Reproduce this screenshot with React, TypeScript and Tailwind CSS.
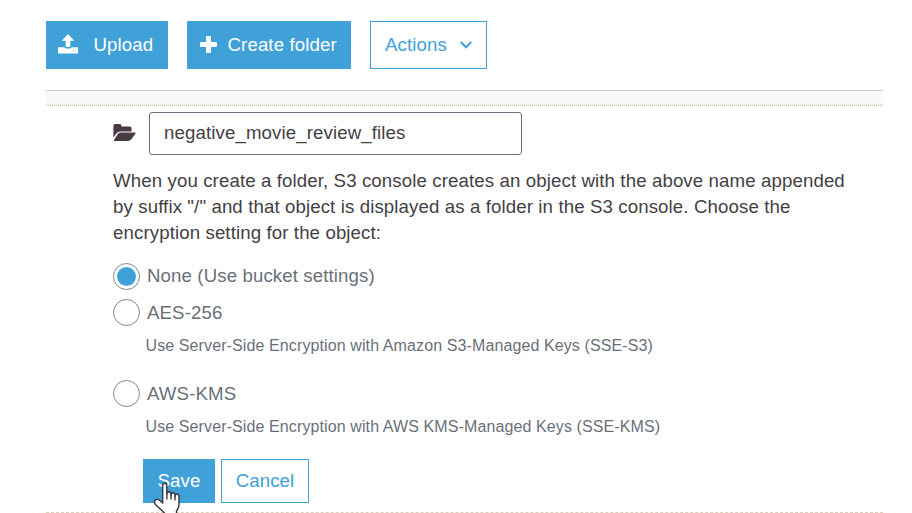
import React from "react";

function UploadIcon() {
  return (
    <svg className="mb-[3px] h-5 w-5 shrink-0" viewBox="0 0 20 20" fill="currentColor">
      <path d="M10 0 16.2 6.8H12.3V12Q12.3 13 11.3 13H8.7Q7.7 13 7.7 12V6.8H3.8Z" />
      <path d="M.5 13.3H6.3L7.6 14.4H12.4L13.7 13.3H19.5Q20 13.3 20 13.8V18.9Q20 19.4 19.5 19.4H.5Q0 19.4 0 18.9V13.8Q0 13.3 .5 13.3Z" />
      <path d="M13.5 16.4h1.4v1.2h-1.4zM16.5 16.4h1.4v1.2h-1.4z" fill="#7fc0e6" />
    </svg>
  );
}

function PlusIcon() {
  return (
    <svg className="mb-[2px] h-[17px] w-[17px] shrink-0" viewBox="0 0 17 17" fill="currentColor">
      <path d="M6 1Q6 0 7 0H10Q11 0 11 1V6H16Q17 6 17 7V10Q17 11 16 11H11V16Q11 17 10 17H7Q6 17 6 16V11H1Q0 11 0 10V7Q0 6 1 6H6Z" />
    </svg>
  );
}

function FolderIcon() {
  return (
    <svg className="mb-[2px] h-[17px] w-[23px] shrink-0" viewBox="0 0 23 17" fill="#463b42">
      <path d="M.4 2Q.4 0 2.2 0H6.6Q8.5 0 8.5 2V2.6H16.7Q18.6 2.6 18.6 4.6V7.4H7.4Q5.2 7.4 3.8 9L.4 13.4Z" />
      <path d="M7.3 8.5H22Q23.2 8.5 22.4 9.7L18.4 15.2Q17 17 15 17H1.6Q.4 17 1.2 15.8L4.8 10.1Q5.8 8.5 7.3 8.5Z" />
    </svg>
  );
}

function HandCursor() {
  return (
    <svg className="absolute top-[23px] left-[10px] h-[34px] w-[27px]" viewBox="0 0 27 34" fill="#fff" stroke="#3c3540" strokeWidth="1.4" strokeLinejoin="round" strokeLinecap="round">
      <path d="M9.7 19V3.7Q9.7 1.2 11.7 1.2T13.8 3.7V12Q14 9.7 16 9.7T18 12V13Q18.2 10.7 20 10.7T22 13V14.3Q22.3 12 24 12T26 14.3V22Q26 26 23.5 29V34H11.5V31L2.4 22.5Q.8 20 2 18.4T6 17.8L9.7 21Z" />
      <path d="M13.9 12V17M18 13V17M22 14.3V18" />
    </svg>
  );
}

type OptionProps = { label: string; labelClass?: string; checked?: boolean; hint?: string };

function EncryptionOption({ label, labelClass = "", checked, hint }: OptionProps) {
  return (
    <div>
      <div className="flex h-[27px] items-center gap-[7px]">
        <span className="flex h-[27px] w-[27px] shrink-0 items-center justify-center rounded-full border border-[#7d8794]">
          {checked && <span className="h-[19px] w-[19px] rounded-full bg-[#40a1d9]" />}
        </span>
        <span className={`text-[18.67px] leading-[26px] whitespace-nowrap ${labelClass}`}>{label}</span>
      </div>
      {hint && <p className="mt-[9px] ml-[32.5px] h-[21px] text-[16px] leading-[22px] whitespace-nowrap">{hint}</p>}
    </div>
  );
}

export default function App() {
  return (
    <main className="h-[513px] w-[912px] overflow-hidden bg-white pt-[21px] pl-[46px] font-['Liberation_Sans',Arial,sans-serif] text-[18.67px] leading-[26px] tracking-[0.108px] text-[#434145]">
      <div className="flex h-12 gap-[19px]">
        <button className="flex w-[122px] items-center gap-[15.5px] bg-[#40a1d9] pl-3 text-white">
          <UploadIcon />
          <span>Upload</span>
        </button>
        <button className="flex w-[164px] items-center gap-[10.5px] bg-[#40a1d9] pl-[13px] whitespace-nowrap text-white">
          <PlusIcon />
          <span>Create folder</span>
        </button>
        <button className="flex w-[117px] items-center gap-[13px] border border-[#40a1d9] pl-[14px] text-[#40a1d9]">
          <span>Actions</span>
          <svg className="h-2 w-3 shrink-0" viewBox="0 0 12 8" fill="none" stroke="currentColor" strokeWidth="2">
            <path d="M.7 1 6 6.3 11.3 1" />
          </svg>
        </button>
      </div>

      <div className="mt-[21px] h-[15px] w-[837px] border-t border-b border-t-[#c9d0cd] border-b-[#e6dfcb] bg-[#f8faf7] [border-bottom-style:dotted]" />

      <section className="h-[408px] w-[837px] border-t border-b border-t-[#c3c9c0] border-b-[#dcd0b8] pt-[6px] pl-[67px] [border-bottom-style:dashed] [border-top-style:dotted]">
        <div className="flex h-[43px] items-center gap-[13px]">
          <FolderIcon />
          <input
            className="h-[43px] w-[373px] rounded-[3px] border border-[#6c7085] bg-white pb-[1px] pl-[14px] outline-none"
            defaultValue="negative_movie_review_files"
          />
        </div>
        <p className="mt-[13px] whitespace-nowrap">
          When you create a folder, S3 console creates an object with the above name appended
          <br />
          by suffix "/" and that object is displayed as a folder in the S3 console. Choose the
          <br />
          encryption setting for the object:
        </p>
        <div className="mt-[17px] text-[#6a7079]">
          <EncryptionOption label="None (Use bucket settings)" labelClass="pb-[2px]" checked />
          <div className="mt-[9px]">
            <EncryptionOption label="AES-256" hint="Use Server-Side Encryption with Amazon S3-Managed Keys (SSE-S3)" />
          </div>
          <div className="mt-6">
            <EncryptionOption label="AWS-KMS" hint="Use Server-Side Encryption with AWS KMS-Managed Keys (SSE-KMS)" />
          </div>
        </div>
        <div className="relative mt-[22px] ml-[30px] flex h-11 gap-[6px]">
          <button className="w-[72px] bg-[#40a1d9] text-white">Save</button>
          <button className="w-[88px] border border-[#40a1d9] text-[#40a1d9]">Cancel</button>
          <HandCursor />
        </div>
      </section>
    </main>
  );
}
